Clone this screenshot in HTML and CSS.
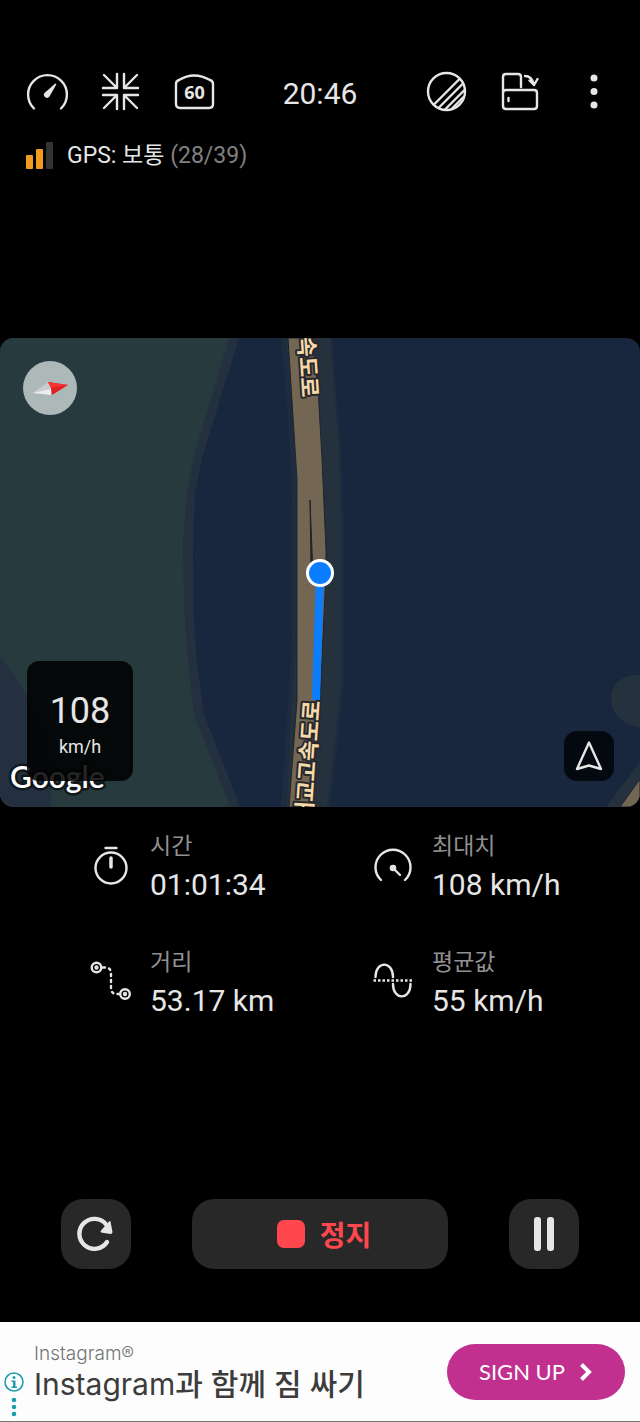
FILE: index.html
```html
<!DOCTYPE html>
<html lang="ko">
<head>
<meta charset="utf-8">
<meta name="viewport" content="width=device-width, initial-scale=1">
<title>GPS 속도계</title>
<link rel="stylesheet" href="styles.css">
</head>
<body>
<div class="app">
  <header class="toolbar">
    <div class="tools">
      <button class="icon-btn" type="button" aria-label="속도계">
        <svg class="icon" viewBox="0 0 44 44"><path d="M10 38.500A19.400 19.400 0 1 1 37 38.500"/><path class="solid" d="M32.300 14.600 25.500 26.600a3 3 0 0 1-5-3.500L31 13.700q1.500-.8 1.300.9z"/></svg>
      </button>
      <button class="icon-btn" type="button" aria-label="축소">
        <svg class="icon" viewBox="0 0 44 44"><path d="M19 4v14H5M6 5l13 13M26 4v14h14M39 5 26 18M19 39V25H5M6 38l13-13M26 39V25h14M39 38 26 25"/></svg>
      </button>
      <button class="icon-btn" type="button" aria-label="속도 제한 60">
        <svg class="icon" viewBox="0 0 44 44"><path d="M4 14q0-3 3-4 15-9 31 0 3 1 3 4v20q0 4-4 4H8q-4 0-4-4z"/><text class="limit" x="22.500" y="29" text-anchor="middle">60</text></svg>
      </button>
    </div>
    <time class="clock">20:46</time>
    <div class="tools tools-end">
      <button class="icon-btn" type="button" aria-label="테마">
        <svg class="icon" viewBox="0 0 44 44"><circle cx="22.500" cy="21.500" r="18.500"/><path d="M10 34.500 35 9.500M15.500 37 39 13.500M21.500 39 40 20.500M28 38.500 39.500 27"/></svg>
      </button>
      <button class="icon-btn" type="button" aria-label="화면 회전">
        <svg class="icon" viewBox="0 0 44 44"><path d="M5 20V7q0-3 3-3h12q3 0 3 3v10M8 20h28q3 0 3 3v13q0 3-3 3H8q-3 0-3-3V23q0-3 3-3zM5 24V18M27 6q7 0 9 9M31.500 10.500 36 15l3.500-6"/><path d="M10.500 28v3"/></svg>
      </button>
      <button class="icon-btn" type="button" aria-label="더보기">
        <svg class="icon" viewBox="0 0 44 44"><g class="solid"><circle cx="22" cy="8" r="3.500"/><circle cx="22" cy="21.500" r="3.500"/><circle cx="22" cy="35" r="3.500"/></g></svg>
      </button>
    </div>
  </header>

  <div class="gps">
    <svg class="signal" viewBox="0 0 27 28"><rect class="on" y="13" width="7" height="14" rx="1"/><rect class="on" x="10" y="7" width="7" height="20" rx="1"/><rect class="off" x="20" width="7" height="27" rx="1"/></svg>
    <span>GPS: 보통 <span class="muted">(28/39)</span></span>
  </div>

  <main>
    <section class="map" aria-label="지도">
      <svg class="map-art" viewBox="0 0 640 469" preserveAspectRatio="xMidYMid slice">
        <rect class="water" width="640" height="469"/>
        <path class="shore" d="M0 0H239L203 117 195 155 193 215 194 280 197 325 204 376 240 469H0z"/>
        <path class="land" d="M0 0H229L194 117 187 155 183 205 184 270 188 325 194 377 230 469H0z"/>
        <path class="shore" d="M0 319q26 28 43 78 10 36 8 72H0z"/>
        <path class="verge-soft" d="M281 0 288 80 292 160V300L287 380 281 469H330L338 400 344 342V190L341 110 332 0z"/>
        <path class="verge" d="M286 0 293 80 296 160V300L291 380 287 469H327L335 400 341 342V190L339 110 330 0z"/>
        <path class="road" d="M288 0 297 142V362L289 469H310L320 362 326 235V212L322 120 318 50 312 0z"/>
        <path class="gap" d="M310 162 311 225H312.500z"/>
        <path class="shore green" d="M640 337c-17-1-29 9-29 24s13 26 29 28z"/>
        <path class="verge" d="M640 424 606 469H640z"/>
        <path class="road" d="M640 441 620 469H640z"/>
        <path class="trail" d="M320 235 316 362"/>
        <text class="road-name" transform="translate(298 -1) rotate(86)">속도로</text>
        <text class="road-name" transform="translate(320 363) rotate(-86)" text-anchor="end">대교고속도로</text>
        <circle class="here" cx="320" cy="235" r="12.500"/>
        <text class="brand" x="10" y="450">Google</text>
      </svg>
      <button class="compass" type="button" aria-label="나침반">
        <svg viewBox="0 0 54 54"><path fill="#ededed" d="M10 32 25 22 28 27 28 34z"/><path fill="#c9cccc" d="M10 32 25 22 28 28z"/><path fill="#e21f22" d="M25 21 45 24 29 34 28 27z"/><path fill="#f53434" d="M25 21 45 24 28 27z"/></svg>
      </button>
      <div class="speed"><strong>108</strong><span>km/h</span></div>
      <button class="follow" type="button" aria-label="방향">
        <svg class="icon" viewBox="0 0 50 50"><path d="M25 11.500 37 38 25 34.500 13 38z"/></svg>
      </button>
    </section>

    <dl class="stats">
      <div class="stat">
        <svg class="icon" viewBox="0 0 44 44"><circle cx="21" cy="25" r="15.500"/><path d="M15.500 5h11"/><path class="heavy" d="M21 15v9"/></svg>
        <div><dt>시간</dt><dd>01:01:34</dd></div>
      </div>
      <div class="stat">
        <svg class="icon" viewBox="0 0 44 44"><path d="M9 37A17.500 17.500 0 1 1 33 37"/><circle class="solid" cx="21" cy="25" r="3.300"/><path d="M21 25 28 32"/></svg>
        <div><dt>최대치</dt><dd>108 km/h</dd></div>
      </div>
      <div class="stat">
        <svg class="icon" viewBox="0 0 44 44"><circle cx="6.500" cy="8.500" r="4.800"/><circle cx="6.500" cy="8.500" r="1"/><circle cx="35" cy="35" r="4.800"/><circle cx="35" cy="35" r="1"/><path stroke-dasharray="2 4" d="M13 8.500h2q6 0 6 6V29q0 6 6 6h2"/></svg>
        <div><dt>거리</dt><dd>53.17 km</dd></div>
      </div>
      <div class="stat">
        <svg class="icon" viewBox="0 0 44 44"><path d="M3.500 18C3.500 1.500 21 1.500 21 18M21 25C21 41.500 38.500 41.500 38.500 25"/><path class="dash" d="M1.500 21.500h39"/></svg>
        <div><dt>평균값</dt><dd>55 km/h</dd></div>
      </div>
    </dl>

    <div class="controls">
      <button class="control" type="button" aria-label="초기화">
        <svg class="icon" viewBox="0 0 70 70"><path class="bold" d="M45.500 26A15 15 0 1 0 46 43"/><path class="solid" d="M49.500 22.500 51.500 33q0 2-2 2L40 33.500q-1-1 0-2L48 22.500q1-1 1.500 0z"/></svg>
      </button>
      <button class="control stop" type="button"><span class="stop-mark"></span>정지</button>
      <button class="control" type="button" aria-label="일시정지">
        <svg class="icon" viewBox="0 0 70 70"><g class="solid"><rect x="25" y="18" width="7" height="34" rx="3"/><rect x="38" y="18" width="7" height="34" rx="3"/></g></svg>
      </button>
    </div>
  </main>

  <aside class="ad">
    <div class="ad-marks">
      <svg viewBox="0 0 22 48"><circle class="ring" cx="11" cy="9" r="9"/><circle cx="11" cy="4.500" r="1.500"/><path d="M8.500 7.500h4v6H14V15H8.500v-1.500H10V9H8.500z"/><circle cx="11" cy="27" r="2.300"/><circle cx="11" cy="34" r="2.300"/><circle cx="11" cy="41" r="2.300"/></svg>
    </div>
    <div class="ad-copy">
      <span class="ad-brand">Instagram®</span>
      <span class="ad-title">Instagram<span class="ad-strong">과 함께 짐 싸기</span></span>
    </div>
    <a class="ad-cta" href="#signup">SIGN UP
      <svg viewBox="0 0 14 20"><path d="M2.500 2.500 10 10 2.500 17.500"/></svg>
    </a>
  </aside>
</div>
</body>
</html>
```

FILE: styles.css
```css
* {
  box-sizing: border-box;
}

body {
  margin: 0;
  background: #000;
  color: #e6e6e6;
  font-family: Roboto, "Noto Sans CJK KR", sans-serif;
}

button {
  margin: 0;
  padding: 0;
  border: 0;
  background: none;
  color: inherit;
  font: inherit;
}

svg {
  display: block;
  overflow: visible;
}

.app {
  display: flex;
  flex-direction: column;
  min-height: 100vh;
  padding-top: 70px;
}

.icon {
  width: 44px;
  height: 44px;
  fill: none;
  stroke: #e6e6e6;
  stroke-width: 2.4;
  stroke-linecap: round;
  stroke-linejoin: round;
}

.icon .solid {
  fill: #e6e6e6;
  stroke: none;
}

.icon .heavy {
  stroke-width: 3.5;
}

.icon .bold {
  stroke-width: 4.4;
}

.icon .dash {
  stroke-dasharray: 2.5 2;
  stroke-linecap: butt;
}

.icon .limit {
  fill: #e6e6e6;
  stroke: none;
  font: 700 18px "Open Sans", sans-serif;
}

.toolbar {
  display: grid;
  grid-template-columns: 1fr auto 1fr;
  align-items: center;
  padding: 0 24px;
}

.tools {
  display: flex;
  gap: 30px;
}

.tools-end {
  justify-content: flex-end;
}

.clock {
  padding-top: 4px;
  font-size: 30px;
  line-height: 40px;
}

.gps {
  display: flex;
  align-items: center;
  gap: 14px;
  padding: 25px 26px 0;
  font-size: 23px;
  line-height: 34px;
}

.signal {
  width: 27px;
  height: 28px;
}

.signal .on {
  fill: #f09a1f;
}

.signal .off {
  fill: #333;
}

.muted {
  color: #808080;
}

.map {
  position: relative;
  margin-top: 165px;
  aspect-ratio: 640 / 469;
  border-radius: 14px;
  overflow: hidden;
}

.map-art {
  width: 100%;
  height: 100%;
}

.water {
  fill: #18263e;
}

.land {
  fill: #273b3e;
}

.shore {
  fill: #243040;
}

.green {
  fill: #25323d;
}

.verge-soft {
  fill: #1e2c3f;
}

.verge {
  fill: #25313d;
}

.road {
  fill: #736653;
  stroke: #1c2430;
  stroke-width: 1;
}

.gap {
  fill: #20242a;
  stroke: #20242a;
  stroke-width: 1;
}

.trail {
  stroke: #0b7dff;
  stroke-width: 8;
}

.here {
  fill: #0b7dff;
  stroke: #fff;
  stroke-width: 3;
}

.road-name {
  fill: #f5d9a8;
  stroke: #25282d;
  stroke-width: 4;
  stroke-linejoin: round;
  paint-order: stroke;
  font: 700 22px "Noto Sans CJK KR", sans-serif;
}

.brand {
  fill: #fff;
  stroke: #10181c;
  stroke-width: 5;
  stroke-linejoin: round;
  paint-order: stroke;
  font: 600 30px Lato, sans-serif;
}

.compass {
  position: absolute;
  top: 23px;
  left: 23px;
  width: 54px;
  height: 54px;
  border-radius: 50%;
  background: #adb8b9;
}

.speed {
  position: absolute;
  bottom: 26px;
  left: 27px;
  display: flex;
  flex-direction: column;
  align-items: center;
  justify-content: center;
  width: 106px;
  height: 120px;
  padding-top: 4px;
  border-radius: 12px;
  background: rgba(0, 0, 0, 0.86);
  font-size: 18px;
  line-height: 24px;
}

.speed strong {
  font-size: 36px;
  font-weight: 400;
  line-height: 48px;
}

.follow {
  position: absolute;
  right: 26px;
  bottom: 26px;
  width: 50px;
  height: 50px;
  border-radius: 13px;
  background: #04080f;
}

.follow .icon {
  width: 50px;
  height: 50px;
}

.stats {
  display: grid;
  grid-template-columns: 1fr 1fr;
  row-gap: 40px;
  margin: 0;
  padding: 21px 0 0 76px;
}

.stat {
  display: flex;
  align-items: center;
  gap: 16px;
  padding-left: 14px;
}

.stat .icon {
  margin-bottom: 2px;
}

.stat dt {
  color: #909090;
  font-size: 23px;
  line-height: 38px;
}

.stat dd {
  margin: 0;
  font-size: 30px;
  line-height: 38px;
}

.controls {
  display: flex;
  gap: 61px;
  padding: 179px 61px 53px;
}

.control {
  width: 70px;
  height: 70px;
  border-radius: 22px;
  background: #282828;
}

.control .icon {
  width: 70px;
  height: 70px;
}

.stop {
  display: flex;
  flex: 1;
  align-items: center;
  justify-content: center;
  gap: 15px;
  padding-left: 8px;
  color: #ff474d;
  font-size: 28px;
  font-weight: 700;
}

.stop-mark {
  width: 28px;
  height: 28px;
  border-radius: 7px;
  background: #ff474d;
}

.ad {
  display: flex;
  align-items: center;
  margin-top: auto;
  min-height: 100px;
  padding-right: 15px;
  border-bottom: 1px solid #777;
  background: #fdfdfd;
  color: #3c3c3c;
  font-family: Inter, "Noto Sans CJK KR", sans-serif;
}

.ad-marks {
  align-self: flex-end;
  padding: 0 9px 0 3px;
}

.ad-marks svg {
  width: 22px;
  height: 48px;
  fill: #1d9cb0;
}

.ad-marks .ring {
  fill: none;
  stroke: #1d9cb0;
  stroke-width: 1.6;
}

.ad-copy {
  display: flex;
  flex: 1;
  flex-direction: column;
}

.ad-brand {
  color: #757575;
  font-size: 19px;
  font-weight: 300;
  line-height: 24px;
}

.ad-title {
  font-size: 30px;
  line-height: 36px;
  white-space: nowrap;
}

.ad-strong {
  font-weight: 500;
}

.ad-cta {
  display: flex;
  align-items: center;
  gap: 14px;
  height: 56px;
  padding: 0 32px;
  border-radius: 28px;
  background: #c2308f;
  color: #fff;
  font: 400 22px Lato, sans-serif;
  text-decoration: none;
  white-space: nowrap;
}

.ad-cta svg {
  width: 14px;
  height: 20px;
  fill: none;
  stroke: #fff;
  stroke-width: 4;
}
```
